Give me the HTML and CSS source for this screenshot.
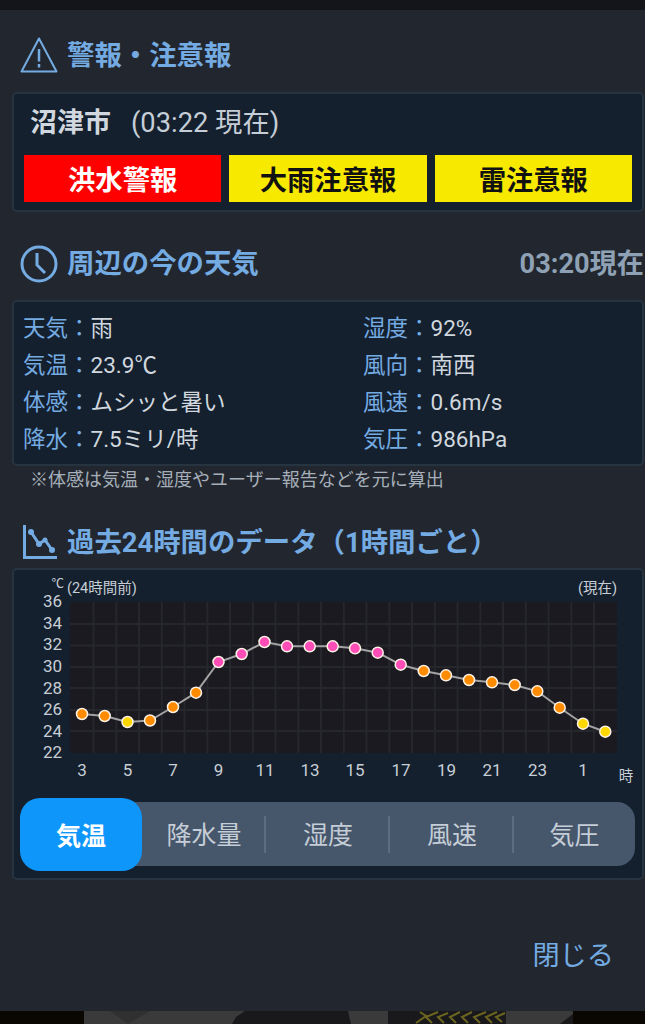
FILE: index.html
```html
<!DOCTYPE html>
<html lang="ja">

<head>
    <meta charset="UTF-8">
    <meta name="viewport" content="width=device-width, initial-scale=1.0">
    <title>周辺の今の天気</title>
    <link rel="stylesheet" href="styles.css">
</head>

<body>
    <div class="statusbar"></div>

    <!-- 警報・注意報 -->
    <h2 class="head head-alert">
        <svg class="head-icon" viewBox="0 0 38 38" width="38" height="38">
            <path d="M19 1.5 L36.5 34.5 H1.5 Z" fill="none" stroke="#74abe2" stroke-width="2" stroke-linejoin="round" />
            <path d="M19 12 V24.5" stroke="#74abe2" stroke-width="2.5" />
            <path d="M19 27 V30.5" stroke="#74abe2" stroke-width="2.5" />
        </svg>
        警報・注意報
    </h2>
    <div class="panel panel-alert">
        <div class="city"><b>沼津市</b><span>(03:22 現在)</span></div>
        <div class="chips">
            <div class="chip chip-red">洪水警報</div>
            <div class="chip chip-yellow">大雨注意報</div>
            <div class="chip chip-yellow">雷注意報</div>
        </div>
    </div>

    <!-- 今の天気 -->
    <h2 class="head head-now">
        <svg class="head-icon" viewBox="0 0 38 38" width="38" height="38">
            <circle cx="19" cy="19" r="17" fill="none" stroke="#74abe2" stroke-width="3" />
            <path d="M17 8 V20 L25 28" fill="none" stroke="#74abe2" stroke-width="3" />
        </svg>
        周辺の今の天気
        <span class="head-time">03:20現在</span>
    </h2>
    <div class="panel panel-now">
        <div class="row"><span class="label">天気：</span>雨</div>
        <div class="row"><span class="label">湿度：</span>92%</div>
        <div class="row"><span class="label">気温：</span>23.9℃</div>
        <div class="row"><span class="label">風向：</span>南西</div>
        <div class="row"><span class="label">体感：</span>ムシッと暑い</div>
        <div class="row"><span class="label">風速：</span>0.6m/s</div>
        <div class="row"><span class="label">降水：</span>7.5ミリ/時</div>
        <div class="row"><span class="label">気圧：</span>986hPa</div>
    </div>
    <p class="note">※体感は気温・湿度やユーザー報告などを元に算出</p>

    <!-- 過去24時間 -->
    <h2 class="head head-past">
        <svg class="head-icon" viewBox="0 0 38 38" width="38" height="38">
            <path d="M4.5 1 V33.5 H37" fill="none" stroke="#74abe2" stroke-width="3" />
            <path d="M11 8 L19 20 L25 16 L32 26" fill="none" stroke="#74abe2" stroke-width="3" />
            <circle cx="11" cy="8" r="3" fill="#74abe2" />
            <circle cx="19" cy="20" r="3" fill="#74abe2" />
            <circle cx="25" cy="16" r="2.5" fill="#74abe2" />
            <circle cx="32" cy="26" r="3" fill="#74abe2" />
        </svg>
        過去24時間のデータ（1時間ごと）
    </h2>
    <div class="panel panel-chart">
        <!-- viewBox is in page coordinates -->
        <svg class="chart" viewBox="14 570 628 222" width="628" height="222">
            <rect x="70" y="602" width="547" height="151" fill="#1a1a20" />
            <path class="grid"
                d="M93.5 602V753M116.3 602V753M139 602V753M161.8 602V753M184.5 602V753M207.3 602V753M230 602V753M252.8 602V753M275.5 602V753M298.3 602V753M321 602V753M343.8 602V753M366.5 602V753M389.3 602V753M412 602V753M434.8 602V753M457.5 602V753M480.3 602V753M503 602V753M525.8 602V753M548.5 602V753M571.3 602V753M594 602V753M70 624H617M70 645.5H617M70 667H617M70 688H617M70 710H617M70 731H617" />

            <text class="unit" x="64" y="588" text-anchor="end">℃</text>
            <text class="small" x="67" y="593">(24時間前)</text>
            <text class="small" x="617" y="593" text-anchor="end">(現在)</text>

            <g class="ylabels" text-anchor="end">
                <text x="62" y="607">36</text>
                <text x="62" y="629">34</text>
                <text x="62" y="650">32</text>
                <text x="62" y="672">30</text>
                <text x="62" y="694">28</text>
                <text x="62" y="715">26</text>
                <text x="62" y="737">24</text>
                <text x="62" y="758">22</text>
            </g>
            <g class="xlabels" text-anchor="middle">
                <text x="82" y="776">3</text>
                <text x="127.5" y="776">5</text>
                <text x="173" y="776">7</text>
                <text x="218.5" y="776">9</text>
                <text x="265" y="776">11</text>
                <text x="310" y="776">13</text>
                <text x="355" y="776">15</text>
                <text x="401" y="776">17</text>
                <text x="446.5" y="776">19</text>
                <text x="492" y="776">21</text>
                <text x="537.5" y="776">23</text>
                <text x="583" y="776">1</text>
            </g>
            <text class="small" x="626" y="781" text-anchor="middle">時</text>

            <polyline class="line"
                points="82,714 104.7,716 127.5,722 150,720.5 173,707 196,692.7 218.5,662 241.7,654 264.5,642 287,646.3 309.7,646.3 332.7,646.3 355,648.3 377.7,652.7 400.7,664.7 423.7,671 446,675.3 469,680 492,682.3 514.7,685 537.3,691.3 559.7,707.7 583,723.7 605.3,731.7" />
            <g class="dots">
                <circle class="orange" cx="82" cy="714" r="5.5" />
                <circle class="orange" cx="104.7" cy="716" r="5.5" />
                <circle class="yellow" cx="127.5" cy="722" r="5.5" />
                <circle class="orange" cx="150" cy="720.5" r="5.5" />
                <circle class="orange" cx="173" cy="707" r="5.5" />
                <circle class="orange" cx="196" cy="692.7" r="5.5" />
                <circle class="pink" cx="218.5" cy="662" r="5.5" />
                <circle class="pink" cx="241.7" cy="654" r="5.5" />
                <circle class="pink" cx="264.5" cy="642" r="5.5" />
                <circle class="pink" cx="287" cy="646.3" r="5.5" />
                <circle class="pink" cx="309.7" cy="646.3" r="5.5" />
                <circle class="pink" cx="332.7" cy="646.3" r="5.5" />
                <circle class="pink" cx="355" cy="648.3" r="5.5" />
                <circle class="pink" cx="377.7" cy="652.7" r="5.5" />
                <circle class="pink" cx="400.7" cy="664.7" r="5.5" />
                <circle class="orange" cx="423.7" cy="671" r="5.5" />
                <circle class="orange" cx="446" cy="675.3" r="5.5" />
                <circle class="orange" cx="469" cy="680" r="5.5" />
                <circle class="orange" cx="492" cy="682.3" r="5.5" />
                <circle class="orange" cx="514.7" cy="685" r="5.5" />
                <circle class="orange" cx="537.3" cy="691.3" r="5.5" />
                <circle class="orange" cx="559.7" cy="707.7" r="5.5" />
                <circle class="yellow" cx="583" cy="723.7" r="5.5" />
                <circle class="yellow" cx="605.3" cy="731.7" r="5.5" />
            </g>
        </svg>

        <div class="tabs">
            <div class="tab tab-active">気温</div>
            <div class="tab">降水量</div>
            <div class="tab">湿度</div>
            <div class="tab">風速</div>
            <div class="tab">気圧</div>
        </div>
    </div>

    <div class="close">閉じる</div>

    <!-- 後ろの地図が少し見えている -->
    <svg class="mapstrip" viewBox="0 0 645 13" width="645" height="13">
        <rect x="84" width="489" height="13" fill="#3a3a3a" />
        <path d="M110 0 H150 L128 13 Z" fill="#303030" />
        <path d="M232 13 L236 6 L245 0 H348 L351 13 Z" fill="#19191b" />
        <rect x="388" width="118" height="13" fill="#19191b" />
        <path d="M560 13 L573 3 V13 Z" fill="#19191b" />
        <path class="squiggle" d="M416 12 L426 5 L420 1 M432 12 L426 6 L438 1 M444 12 L438 6 L448 2 M456 12 L450 6 L460 1 M468 12 L462 6 L472 1 M480 12 L474 6 L486 1 M492 12 L486 6 L497 1 M502 11 L496 6 L505 2" />
    </svg>
</body>

</html>
```

FILE: styles.css
```css
* {
    margin: 0;
    padding: 0;
    box-sizing: border-box;
}

body {
    display: flex;
    flex-direction: column;
    width: 645px;
    height: 1024px;
    overflow: hidden;
    font-family: Roboto, "Noto Sans CJK JP", sans-serif;
    background-color: #22272f;
    color: #d0d7de;
}

.statusbar {
    height: 10px;
    background-color: #14151a;
}

.head {
    display: flex;
    align-items: center;
    gap: 9px;
    height: 38px;
    box-sizing: content-box;
    padding: 0 1px 17px 20px;
    font-size: 27.4px;
    font-weight: 700;
    line-height: 38px;
    color: #74abe2;
}

.head-alert {
    margin-top: 27px;
}

.head-now {
    margin-top: 33px;
}

.head-past {
    margin-top: 30px;
    padding-bottom: 6px;
}

.head-icon {
    flex: none;
}

.head-time {
    margin-left: auto;
    font-size: 27.2px;
    color: #8fa2b5;
}

.panel {
    margin-left: 12px;
    width: 632px;
    border: 2px solid #263340;
    border-radius: 5px;
    background-color: #14202e;
}

.panel-alert {
    padding: 9px 10px 8px;
}

.city {
    display: flex;
    gap: 20px;
    margin-left: 6px;
    margin-bottom: 12px;
    font-size: 27px;
    line-height: 40px;
}

.city span {
    font-size: 27.3px;
    color: #c5cdd6;
}

.chips {
    display: grid;
    grid-template-columns: repeat(3, 1fr);
    gap: 8px;
}

.chip {
    height: 47px;
    font-size: 27.3px;
    font-weight: 700;
    line-height: 53px;
    text-align: center;
}

.chip-red {
    background-color: #ff0000;
    color: #ffffff;
}

.chip-yellow {
    background-color: #f7e900;
    color: #111111;
}

.panel-now {
    display: grid;
    grid-template-columns: 340px 1fr;
    grid-auto-rows: 37px;
    padding: 7.5px 0 6.5px 9px;
}

.row {
    font-size: 22.5px;
    line-height: 37px;
    white-space: nowrap;
}

.label {
    color: #74abe2;
}

.note {
    height: 28px;
    padding-left: 30px;
    font-size: 18px;
    line-height: 28px;
    color: #a6afb9;
}

.chart {
    display: block;
}

.chart text {
    fill: #c8ced6;
    font-size: 17px;
}

.chart .small {
    font-size: 14.5px;
}

.chart .unit {
    font-size: 12.5px;
}

.grid {
    fill: none;
    stroke: #25272d;
    stroke-width: 2;
}

.line {
    fill: none;
    stroke: #a3a3a3;
    stroke-width: 2;
}

.dots circle {
    stroke: #fff3e6;
    stroke-width: 1.5;
}

.orange {
    fill: #ff8c00;
}

.yellow {
    fill: #ffd700;
}

.pink {
    fill: #ff4db8;
}

.tabs {
    display: flex;
    height: 64px;
    margin: 10px 7px 12px 6px;
    border-radius: 18px;
    background-color: #46566b;
}

.tab {
    position: relative;
    flex: 124px 0 0;
    font-size: 25px;
    line-height: 67px;
    text-align: center;
    color: #c5cdd6;
}

.tab:last-child {
    flex-basis: 121px;
}

.tab:nth-child(n+2):not(:last-child)::after {
    content: "";
    position: absolute;
    top: 14px;
    right: 0;
    width: 2px;
    height: 37px;
    background-color: #5d6c80;
}

.tab-active {
    flex-basis: 122px;
    margin: -4px 0 -5px;
    border-radius: 20px;
    background-color: #0f96fa;
    color: #ffffff;
    font-weight: 700;
    line-height: 78px;
}

.close {
    margin-top: 56px;
    padding-right: 31px;
    font-size: 27.2px;
    line-height: 40px;
    text-align: right;
    color: #74abe2;
}

.mapstrip {
    display: block;
    margin-top: auto;
    background-color: #0a0703;
}

.squiggle {
    fill: none;
    stroke: #6b6420;
    stroke-width: 2;
}
```
